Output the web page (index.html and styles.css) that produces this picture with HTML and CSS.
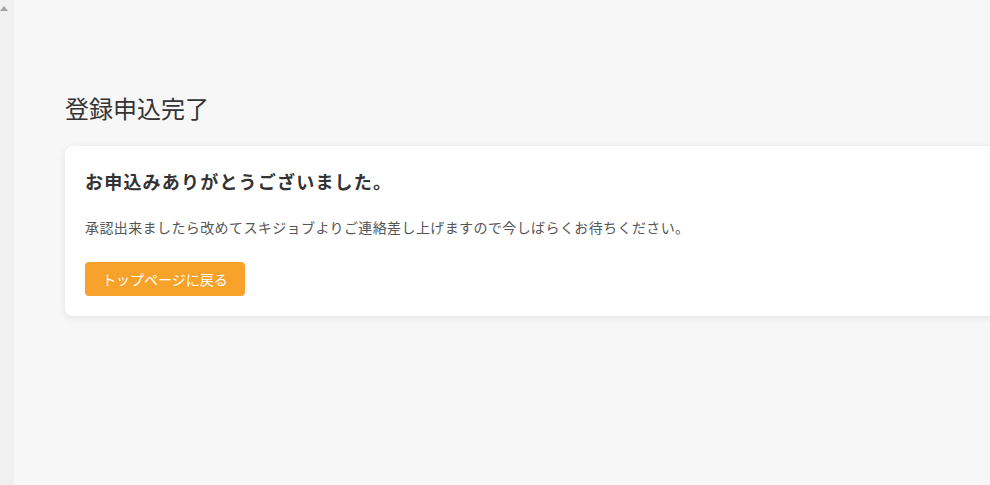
FILE: index.html
```html
<!DOCTYPE html>
<html lang="ja">
  <head>
    <meta charset="UTF-8" />
    <meta name="viewport" content="width=device-width, initial-scale=1.0" />
    <title>登録申込完了</title>
    <link rel="stylesheet" href="styles.css">
  </head>
  <body>
    <!-- 左のスクロールバー -->
    <div class="side_bar">
      <div class="arrow_up"></div>
    </div>

    <div class="main">
      <h1 class="page_title">登録申込完了</h1>

      <!-- 完了カード -->
      <div class="card">
        <h2 class="card_title">お申込みありがとうございました。</h2>
        <p class="card_text">承認出来ましたら改めてスキジョブよりご連絡差し上げますので今しばらくお待ちください。</p>
        <a class="btn" href="#">トップページに戻る</a>
      </div>
    </div>
  </body>
</html>
```

FILE: styles.css
```css
*,
*::before,
*::after {
  margin: 0;
  padding: 0;
  box-sizing: border-box;
}

body {
  display: flex;
  height: 100vh;
  overflow: hidden;

  background: #f7f7f7;
  color: #333;
  font-family: "Noto Sans CJK JP", "Noto Sans", sans-serif;
}

/* ------------------------------ 左のスクロールバー ------------------------------ */
.side_bar {
  width: 14px;
  flex-shrink: 0;
  background: #f0f0f0;
}

.arrow_up {
  width: 0;
  height: 0;
  margin: 6px 0 0 0;
  border-left: 4px solid transparent;
  border-right: 4px solid transparent;
  border-bottom: 5px solid #a3a3a3;
}

/* ---------------------------------- メイン ---------------------------------- */
.main {
  flex: 1;
  min-width: 0;
  overflow: hidden;
  padding: 91px 0 0 51px;
}

.page_title {
  font-size: 24px;
  font-weight: normal;
  line-height: 34px;
  color: #333;
  margin-bottom: 21px;
}

/* ---------------------------------- カード ---------------------------------- */
.card {
  width: 1000px;
  background: #fff;
  border-radius: 8px;
  box-shadow: 0 2px 10px rgba(0, 0, 0, 0.08);
  padding: 22px 20px 20px;
}

.card_title {
  font-size: 18px;
  font-weight: bold;
  line-height: 26px;
  letter-spacing: 1.2px;
  color: #333;
}

.card_text {
  margin-top: 23px;
  font-size: 14px;
  line-height: 20px;
  letter-spacing: 0.4px;
  color: #555;
}

.btn {
  display: block;
  margin-top: 25px;
  width: 160px;
  height: 34px;
  line-height: 34px;
  text-align: center;
  border-radius: 4px;
  background: #f7a22a;
  color: #fff;
  font-size: 14px;
  text-decoration: none;
}
```
